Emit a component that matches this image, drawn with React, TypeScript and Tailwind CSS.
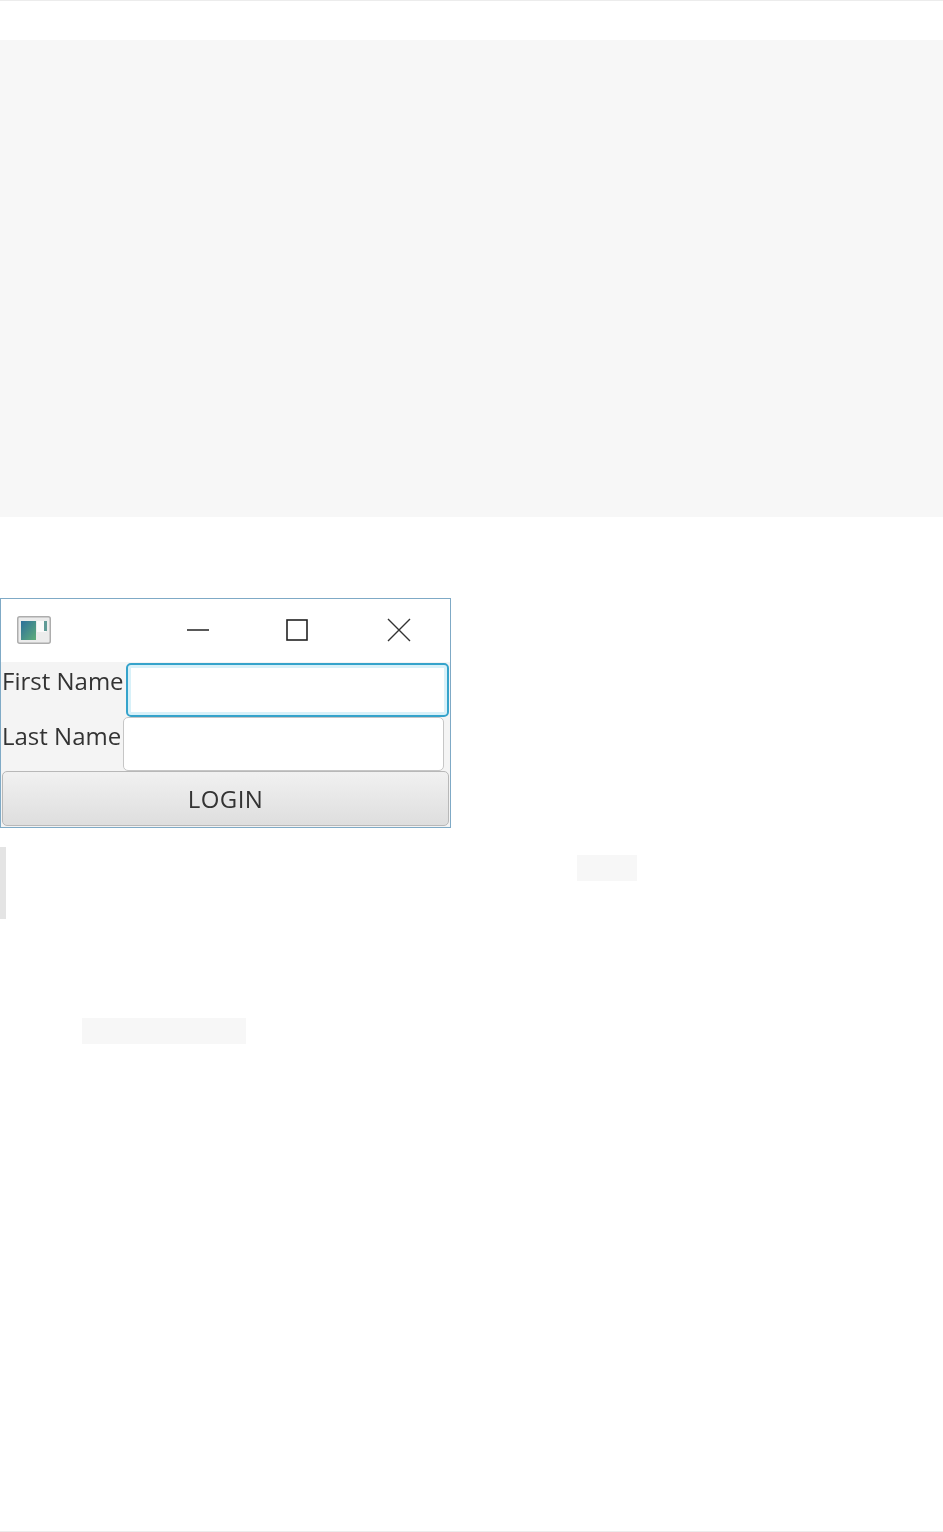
const labelClass =
  "w-fit self-start pl-[1px] font-['Open_Sans','Noto_Sans',sans-serif] text-[24px] leading-[38px] text-[#333333] blur-[0.4px]";

function LoginWindow() {
  return (
    <div className="flex h-[230px] w-[451px] flex-col border border-[#7faac6] bg-[#f4f4f4]">
      <div className="flex h-[63px] shrink-0 items-center bg-white pb-[2px]">
        <svg width="34" height="28" viewBox="0 0 34 28" className="ml-[16px] blur-[0.5px]">
          <rect x="0.75" y="0.75" width="32.5" height="26.5" rx="2" fill="#ececec" stroke="#adadad" strokeWidth="1.5" />
          <defs>
            <linearGradient id="tile" x1="0" y1="0" x2="1" y2="1">
              <stop offset="0" stopColor="#2c6f9b" />
              <stop offset="1" stopColor="#5fae7a" />
            </linearGradient>
          </defs>
          <rect x="4" y="5" width="15" height="19" fill="url(#tile)" />
          <rect x="20" y="5" width="9" height="11" fill="#fafafa" />
          <rect x="27" y="5" width="3" height="10" fill="#5f9a96" />
        </svg>
        <svg width="22" height="4" viewBox="0 0 22 4" className="ml-[136px]">
          <path d="M0 2H22" stroke="#222" strokeWidth="1.5" />
        </svg>
        <svg width="22" height="22" viewBox="0 0 22 22" className="ml-[77px]">
          <rect x="1" y="1" width="20" height="20" fill="none" stroke="#222" strokeWidth="1.6" />
        </svg>
        <svg width="24" height="24" viewBox="0 0 24 24" className="ml-[79px]">
          <path d="M1 1L23 23M23 1L1 23" stroke="#333" strokeWidth="1.4" />
        </svg>
      </div>

      <div className="flex h-[55px] shrink-0">
        <div className={labelClass}>First Name</div>
        <div className="ml-[2px] mr-[1px] mt-[1px] flex-1 rounded-[5px] border-2 border-[#35a3cb] bg-white shadow-[inset_0_0_0_3px_#d8f1f9] blur-[0.3px]" />
      </div>

      <div className="flex h-[54px] shrink-0">
        <div className={labelClass}>Last Name</div>
        <div className="ml-[2px] mr-[6px] flex-1 rounded-[5px] border border-[#c6c6c6] bg-white" />
      </div>

      <button
        type="button"
        className="mx-[1px] h-[55px] shrink-0 rounded-[5px] border border-[#b8b8b8] bg-gradient-to-b from-[#f1f1f1] to-[#dedede] font-['Open_Sans','Noto_Sans',sans-serif] text-[24px] tracking-[0.4px] text-[#333333] blur-[0.3px]"
      >
        LOGIN
      </button>
    </div>
  );
}

export default function App() {
  return (
    <div className="flex h-[1532px] flex-col border-y border-[#ececec] bg-white">
      <div className="mt-[39px] h-[477px] shrink-0 bg-[#f7f7f7]" />

      <div className="mt-[81px]">
        <LoginWindow />
      </div>

      <div className="mt-[19px] h-[72px] border-l-[6px] border-[#e4e4e4] pl-[571px] pt-[8px]">
        <div className="h-[26px] w-[60px] bg-[#f7f7f7]" />
      </div>

      <div className="ml-[82px] mt-[99px] h-[26px] w-[164px] bg-[#f7f7f7]" />
    </div>
  );
}
